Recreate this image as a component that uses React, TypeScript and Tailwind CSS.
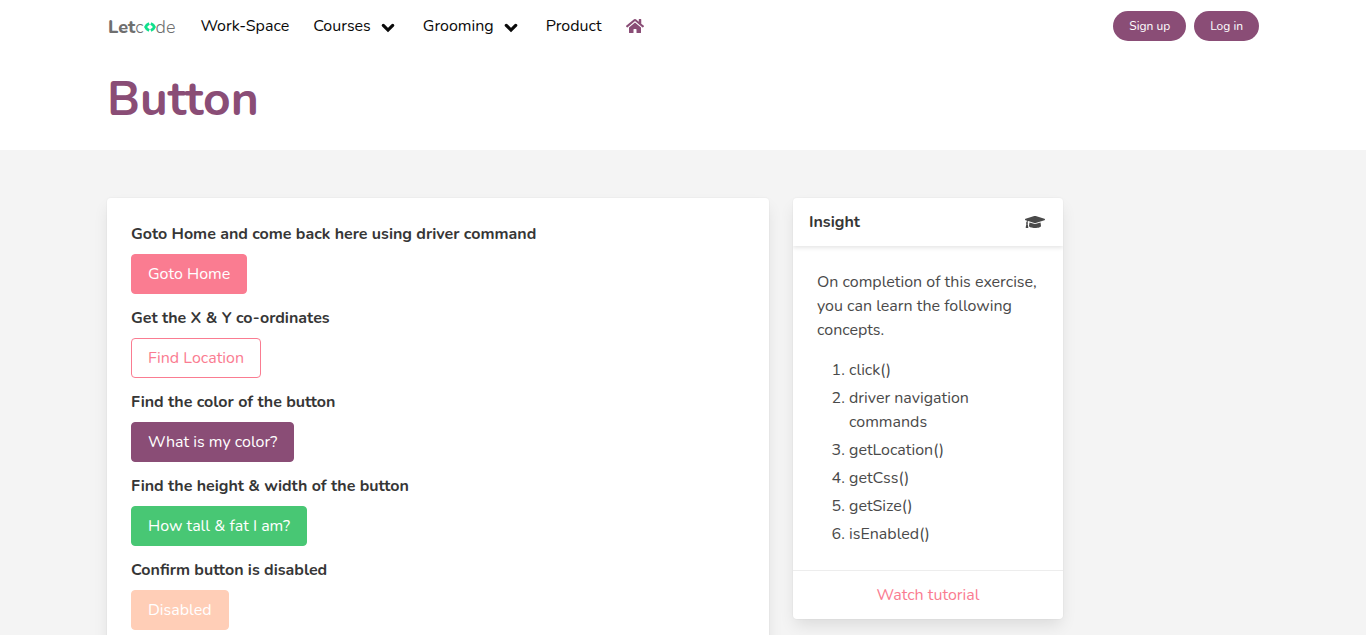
import React from "react";
import { FaHome, FaGraduationCap } from "react-icons/fa";

const exercises = [
  { label: "Goto Home and come back here using driver command", id: "home", text: "Goto Home", cls: "border-[#fa7c91] bg-[#fa7c91] text-white" },
  { label: "Get the X & Y co-ordinates", id: "position", text: "Find Location", cls: "border-[#fa7c91] bg-white text-[#fa7c91]" },
  { label: "Find the color of the button", id: "color", text: "What is my color?", cls: "border-[#8a4d76] bg-[#8a4d76] text-white" },
  { label: "Find the height & width of the button", id: "property", text: "How tall & fat I am?", cls: "border-[#48c774] bg-[#48c774] text-white" },
  { label: "Confirm button is disabled", id: "disabled", text: "Disabled", cls: "border-[#ffceb7] bg-[#ffceb7] text-white", disabled: true },
];

const concepts = ["click()", "driver navigation commands", "getLocation()", "getCss()", "getSize()", "isEnabled()"];

function Logo() {
  return (
    <a href="#" aria-label="Letcode" className="mr-[25px] flex h-8 items-center pt-[2px] pl-px text-lg leading-6 font-light text-[#6f6f6f]">
      <span className="font-extrabold">Let</span>c
      <svg viewBox="0 0 12 10" className="h-[10px] w-[12px]" fill="none" stroke="#10e08c" strokeWidth="2.8" strokeLinejoin="round">
        <path d="M5.2 1.4C3.5 2.2 2.2 3.4 1.6 5c.6 1.6 1.9 2.8 3.6 3.6M6.8 1.4C8.5 2.2 9.8 3.4 10.4 5c-.6 1.6-1.9 2.8-3.6 3.6" />
      </svg>
      de
    </a>
  );
}

function NavMenu({ text }: { text: string }) {
  return (
    <button className="mr-1 flex cursor-pointer items-center gap-[10px]">
      {text}
      <svg viewBox="0 0 14 10" className="mt-[3px] h-[10px] w-[14px]" fill="none" stroke="currentColor" strokeWidth="3.2" strokeLinecap="round">
        <path d="M2.3 2.4 7 7.1l4.7-4.7" />
      </svg>
    </button>
  );
}

export default function App() {
  return (
    <div className="min-h-screen bg-[#f4f4f4] font-['Nunito','Lato',sans-serif] text-base text-[#4a4a4a] antialiased">
      <header className="bg-white">
        <div className="mx-auto flex h-[52px] max-w-6xl items-center text-[#0a0a0a]">
          <Logo />
          <nav className="flex flex-1 items-center gap-6">
            <a href="#">Work-Space</a>
            <NavMenu text="Courses" />
            <NavMenu text="Grooming" />
            <a href="#">Product</a>
            <a href="#" aria-label="Home" className="text-lg text-[#8a4d76]"><FaHome /></a>
          </nav>
          <div className="flex gap-2 text-xs text-white">
            <a href="#" className="rounded-full bg-[#8a4d76] px-4 py-[7px]">Sign up</a>
            <a href="#" className="rounded-full bg-[#8a4d76] px-4 py-[7px]">Log in</a>
          </div>
        </div>
        <div className="mx-auto max-w-6xl pt-5 pb-6">
          <h1 className="text-5xl leading-[54px] font-bold text-[#8a4d76]">Button</h1>
        </div>
      </header>
      <main className="mx-auto grid max-w-6xl grid-cols-12 items-start gap-6 pt-12">
        <section className="col-span-7 rounded bg-white p-6 shadow-[0_8px_16px_-2px_rgba(10,10,10,0.1),0_0_0_1px_rgba(10,10,10,0.02)]">
          {exercises.map((e) => (
            <div key={e.id} className="mb-3">
              <label htmlFor={e.id} className="mb-2 block font-bold text-[#363636]">{e.label}</label>
              <button id={e.id} disabled={e.disabled} className={"h-10 rounded border px-4 " + e.cls}>{e.text}</button>
            </div>
          ))}
        </section>
        <aside className="col-span-3 overflow-hidden rounded bg-white shadow-[0_8px_16px_-2px_rgba(10,10,10,0.1),0_0_0_1px_rgba(10,10,10,0.02)]">
          <header className="flex items-center justify-between px-4 py-3 font-bold text-[#363636] shadow-[0_2px_4px_rgba(10,10,10,0.1)]">
            <h2>Insight</h2>
            <FaGraduationCap className="mr-[2px] size-5 text-[#4a4a4a]" />
          </header>
          <div className="p-6">
            <p>On completion of this exercise, you can learn the following concepts.</p>
            <ol className="mt-4 ml-8 list-decimal space-y-1">
              {concepts.map((c) => <li key={c}>{c}</li>)}
            </ol>
          </div>
          <footer className="border-t border-[#ededed]">
            <a href="#" className="block py-3 text-center text-[#fa7c91]">Watch tutorial</a>
          </footer>
        </aside>
      </main>
    </div>
  );
}
